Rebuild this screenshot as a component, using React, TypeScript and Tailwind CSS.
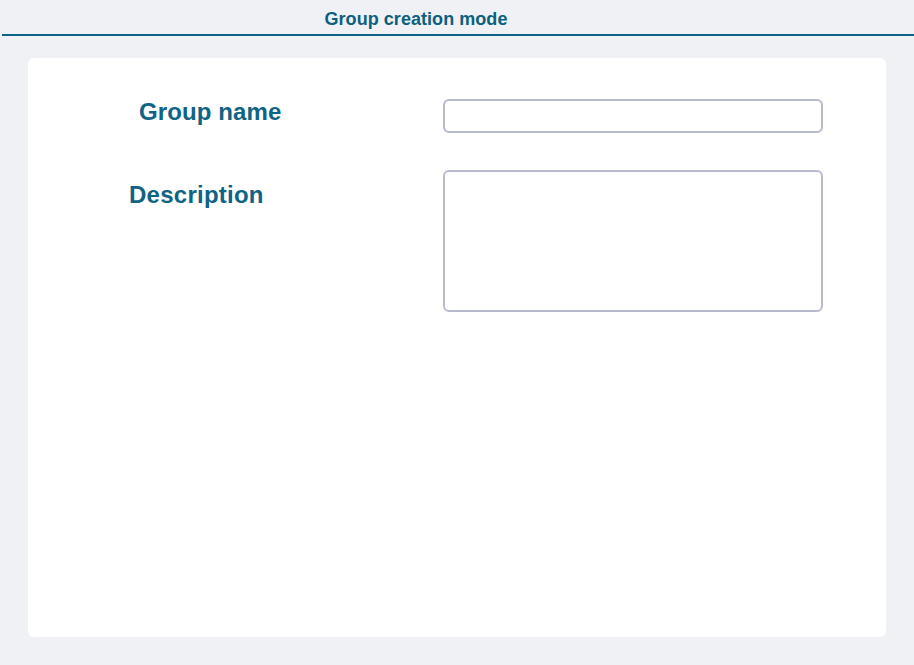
const App = () => {
  return (
    <div className="min-h-[665px] bg-[#eff1f5] font-['Liberation_Sans',Arial,sans-serif] flex flex-col">
      <div className="ml-[2px] h-[36px] border-b-2 border-[#0d6385] flex items-center justify-center pr-[84px] pt-[4px]">
        <h1 className="text-[18px] font-bold text-[#0d5f7f] leading-none tracking-[0.05px]">Group creation mode</h1>
      </div>

      <div className="mx-[28px] mt-[22px] h-[579px] bg-white rounded-md pt-[40px]">
        <div className="flex items-start">
          <div className="w-[415px] pl-[111px]">
            <label className="text-[24px] leading-[28px] font-bold text-[#0f6384] tracking-[0.1px]">Group name</label>
          </div>
          <input
            type="text"
            className="mt-px w-[380px] h-[34px] border-2 border-[#b8bacd] rounded-md outline-none"
          />
        </div>

        <div className="flex items-start mt-[37px]">
          <div className="w-[415px] pl-[101px] mt-[11px]">
            <label className="text-[24px] leading-[28px] font-bold text-[#0f6384] tracking-[0.25px]">Description</label>
          </div>
          <textarea className="w-[380px] h-[142px] border-2 border-[#b8bacd] rounded-md outline-none resize-none" />
        </div>
      </div>
    </div>
  );
};

export default App;
